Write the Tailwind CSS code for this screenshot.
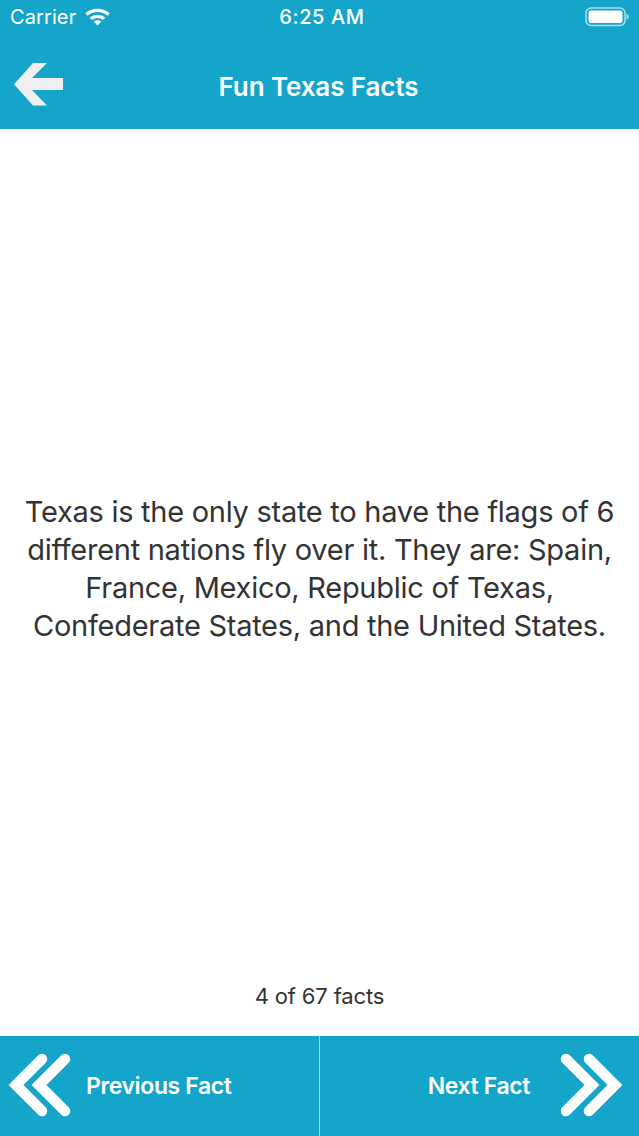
<!doctype html>
<html>
<head>
<meta charset="utf-8">
<script src="https://cdn.jsdelivr.net/npm/@tailwindcss/browser@4"></script>
</head>
<body class="m-0 bg-white font-['Inter','Liberation_Sans',sans-serif]">
<div class="flex h-[1136px] w-[639px] flex-col overflow-hidden">
  <header class="h-[129px] shrink-0 bg-[#15a4ca] text-white">
    <div class="grid h-[34px] grid-cols-3 items-center pl-[10px] pr-[8px]">
      <div class="flex items-center gap-[9px] text-[20px] leading-none tracking-[0.1px]">
        <span>Carrier</span>
        <svg width="25" height="18" viewBox="0 0 25 18" fill="none" stroke="white" stroke-width="3.400"><path d="M1.500 6.500C7.500 1 17.500 1 23.500 6.500"/><path d="M5.800 10.800C9.500 7.500 15.500 7.500 19.200 10.800"/><path d="M12.500 17.500l-3.800-4c2.200-1.700 5.400-1.700 7.600 0z" fill="white" stroke="none"/></svg>
      </div>
      <div class="pl-[3px] text-center text-[20px] leading-none font-medium tracking-[0.6px] whitespace-nowrap">6:25 AM</div>
      <div class="flex justify-end">
        <svg width="46" height="20" viewBox="0 0 46 20"><rect x="1" y="1" width="39" height="17.500" rx="5" fill="none" stroke="#a9e0ef" stroke-width="1.500"/><rect x="3.500" y="3.500" width="34" height="12.500" rx="2.500" fill="white"/><path d="M41.500 7c1.500.3 2.200 1.300 2.200 2.700s-.7 2.400-2.200 2.700z" fill="#a9e0ef"/></svg>
      </div>
    </div>
    <div class="relative flex h-[95px] items-center justify-center">
      <svg class="absolute left-[13px] top-[29px]" width="51" height="43" viewBox="0 0 51 43"><path d="M20 0H34L19 15H50V27H19L34 42.500H20L1 21.200Z" fill="#efeff4"/></svg>
      <h1 class="pt-[10px] pr-[2px] text-[26px] leading-none font-semibold tracking-[-0.1px]">Fun Texas Facts</h1>
    </div>
  </header>
  <main class="flex min-h-0 flex-1 flex-col items-center text-[#333333]">
    <div class="flex flex-1 items-center justify-center px-[22px] pt-[26px]">
      <p class="w-[595px] text-center text-[29px] leading-[38px] tracking-[-0.27px]">Texas is the only state to have the flags of 6 different nations fly over it. They are: Spain, France, Mexico, Republic of Texas, Confederate States, and the United States.</p>
    </div>
    <p class="pb-[27px] text-[22px] leading-[26px] tracking-[-0.15px]">4 of 67 facts</p>
  </main>
  <footer class="flex h-[100px] shrink-0 bg-[#15a4ca] text-white">
    <button class="flex w-[320px] items-center border-r border-[#9fdcec] pl-[8px]">
      <svg class="overflow-visible" width="62" height="62" viewBox="0 0 62 62" fill="none" stroke="white" stroke-width="10.500" stroke-linecap="round" stroke-linejoin="miter"><path d="M57 4L31 30L57 56"/><path d="M34 4L8 30L34 56"/></svg>
      <span class="ml-[16px] text-[23px] font-semibold tracking-[-0.38px]">Previous Fact</span>
    </button>
    <button class="flex flex-1 items-center justify-end pr-[16px]">
      <span class="mr-[31px] text-[23px] font-semibold tracking-[-0.38px]">Next Fact</span>
      <svg class="overflow-visible" width="62" height="62" viewBox="0 0 62 62" fill="none" stroke="white" stroke-width="10.500" stroke-linecap="round" stroke-linejoin="miter"><path d="M5 4L31 30L5 56"/><path d="M28 4L54 30L28 56"/></svg>
    </button>
  </footer>
</div>
</body>
</html>
